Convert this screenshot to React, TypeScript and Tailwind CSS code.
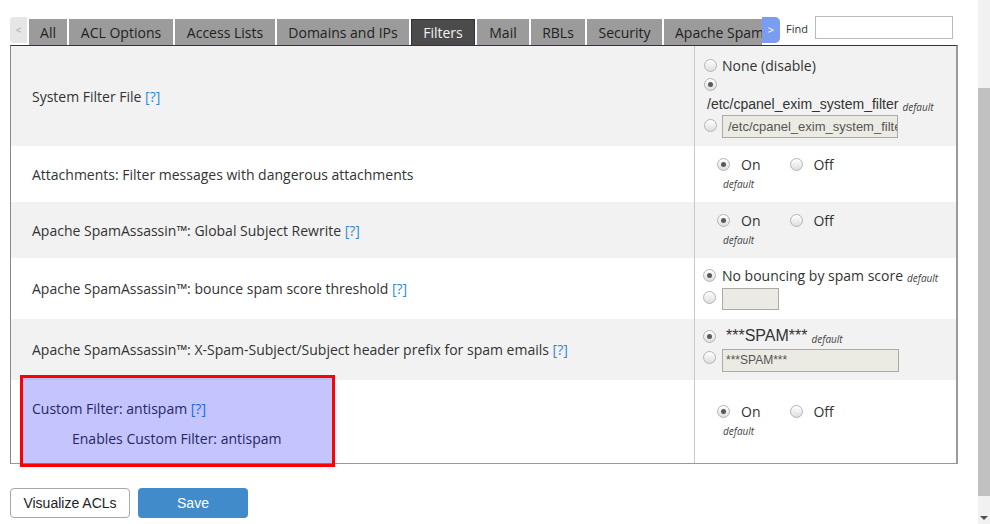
import React from "react";

const OS = "font-['Open_Sans',sans-serif]";
const AR = "font-['Liberation_Sans',Arial,sans-serif]";

function Radio({ checked = false, className = "" }: { checked?: boolean; className?: string }) {
  return (
    <span
      className={`inline-flex shrink-0 w-[13px] h-[13px] rounded-full border border-[#b4b4b4] bg-gradient-to-b from-[#ffffff] to-[#dedede] items-center justify-center ${className}`}
    >
      {checked && <span className="w-[5px] h-[5px] rounded-full bg-[#5a5a5a]" />}
    </span>
  );
}

function Help() {
  return <span className="text-[#2e8ad8]">[?]</span>;
}

function Def() {
  return <span className={`${OS} italic text-[10px] text-[#444]`}>default</span>;
}

function OnOff({ pt }: { pt: string }) {
  return (
    <div className={`${pt} pl-[22px] ${OS} text-[14px] text-[#333]`}>
      <div className="flex items-center h-[20px]">
        <Radio checked />
        <span className="ml-[11px]">On</span>
        <Radio className="ml-[30px]" />
        <span className="ml-[10px]">Off</span>
      </div>
      <div className="mt-[1px] h-[16px] leading-[16px] pl-[6px]">
        <Def />
      </div>
    </div>
  );
}

const tabs: { t: string; w: string; active?: boolean }[] = [
  { t: "All", w: "w-[38px]" },
  { t: "ACL Options", w: "w-[104px]" },
  { t: "Access Lists", w: "w-[100px]" },
  { t: "Domains and IPs", w: "w-[132px]" },
  { t: "Filters", w: "w-[64px]", active: true },
  { t: "Mail", w: "w-[52px]" },
  { t: "RBLs", w: "w-[54px]" },
  { t: "Security", w: "w-[75px]" },
  { t: "Apache SpamAssassin™", w: "w-[170px]" },
];

export default function App() {
  return (
    <div className="flex w-[990px] h-[524px] overflow-hidden bg-white">
      <div className="flex-1 pl-[10px] text-[#333]">
        {/* tab bar */}
        <div className="flex items-start h-[29px] mt-[16px]">
          <div className="mt-[1px] h-[26px] w-[17px] bg-[#e6e6e6] rounded-l-[4px] flex items-center justify-center text-[10px] text-[#aaa]">
            &lt;
          </div>
          <div className="ml-[2px] mt-[3px] h-[26px] w-[733px] overflow-hidden flex gap-[2px]">
            {tabs.map(({ t, w, active }) => (
              <div
                key={t}
                className={`${OS} ${w} shrink-0 h-[26px] flex items-center justify-center text-[14px] whitespace-nowrap ${
                  active
                    ? "bg-[#4b4b4b] text-[#f2f2f2] border border-[#2b3448] border-b-0"
                    : "bg-[#9b9b9b] text-[#222]"
                } ${t.startsWith("Apache") ? "justify-start pl-[11px]" : ""}`}
              >
                {t}
              </div>
            ))}
          </div>
          <div className="mt-[1px] h-[26px] w-[18px] bg-[#7a9cf2] rounded-r-[5px] flex items-center justify-center text-[11px] text-white">
            &gt;
          </div>
          <span className={`${OS} ml-[6px] mt-[5px] text-[11px] text-[#333]`}>Find</span>
          <input className="ml-[7px] w-[138px] h-[23px] border border-[#bbb] bg-white outline-none" />
        </div>

        {/* panel */}
        <div className={`w-[948px] border-l border-l-[#888] border-r-2 border-r-[#9a9a9a] border-t border-t-[#2b3448] border-b border-b-[#999] ${OS} text-[14px]`}>
          {/* row 1 */}
          <div className="flex h-[100px] bg-[#f2f2f2]">
            <div className="w-[683px] pl-[21px] flex items-center">
              System Filter File&nbsp;<Help />
            </div>
            <div className="flex-1 border-l border-[#c8c8c8] pt-[9px] pl-[9px]">
              <div className="flex items-center h-[20px]">
                <Radio />
                <span className="ml-[5px]">None (disable)</span>
              </div>
              <div className="flex items-center h-[19px]">
                <Radio checked />
              </div>
              <div className="flex items-center h-[20px] pl-[3px]">
                <span className={`${AR} text-[14px]`}>/etc/cpanel_exim_system_filter</span>
                <span className="ml-[4px] mt-[2px]">
                  <Def />
                </span>
              </div>
              <div className="flex items-start h-[23px] mt-[1px]">
                <Radio className="mt-[4px]" />
                <div className={`ml-[5px] w-[176px] h-[23px] bg-[#ebebe4] border border-[#aaa] ${AR} text-[13px] text-[#555] pl-[5px] leading-[21px] overflow-hidden whitespace-nowrap`}>
                  /etc/cpanel_exim_system_filter
                </div>
              </div>
            </div>
          </div>

          {/* row 2 */}
          <div className="flex h-[56px] bg-white">
            <div className="w-[683px] pl-[21px] flex items-center">
              Attachments: Filter messages with dangerous attachments
            </div>
            <div className="flex-1 border-l border-[#c8c8c8]">
              <OnOff pt="pt-[8px]" />
            </div>
          </div>

          {/* row 3 */}
          <div className="flex h-[56px] bg-[#f2f2f2]">
            <div className="w-[683px] pl-[21px] flex items-center">
              Apache SpamAssassin™: Global Subject Rewrite&nbsp;<Help />
            </div>
            <div className="flex-1 border-l border-[#c8c8c8]">
              <OnOff pt="pt-[8px]" />
            </div>
          </div>

          {/* row 4 */}
          <div className="flex h-[61px] bg-white">
            <div className="w-[683px] pl-[21px] flex items-center">
              Apache SpamAssassin™: bounce spam score threshold&nbsp;<Help />
            </div>
            <div className="flex-1 border-l border-[#c8c8c8] pt-[7px] pl-[8px]">
              <div className="flex items-center h-[20px]">
                <Radio checked />
                <span className="ml-[6px]">No bouncing by spam score</span>
                <span className="ml-[4px] mt-[2px]">
                  <Def />
                </span>
              </div>
              <div className="flex items-start mt-[3px]">
                <Radio className="mt-[3px]" />
                <div className="ml-[6px] w-[57px] h-[22px] bg-[#ebebe4] border border-[#aaa]" />
              </div>
            </div>
          </div>

          {/* row 5 */}
          <div className="flex h-[61px] bg-[#f2f2f2]">
            <div className="w-[683px] pl-[21px] flex items-center">
              Apache SpamAssassin™: X-Spam-Subject/Subject header prefix for spam emails&nbsp;<Help />
            </div>
            <div className="flex-1 border-l border-[#c8c8c8] pt-[7px] pl-[8px]">
              <div className="flex items-center h-[20px]">
                <Radio checked />
                <span className={`ml-[10px] ${AR} text-[16px]`}>***SPAM***</span>
                <span className="ml-[4px] mt-[3px]">
                  <Def />
                </span>
              </div>
              <div className="flex items-start mt-[3px]">
                <Radio className="mt-[2px]" />
                <div className={`ml-[6px] w-[177px] h-[23px] bg-[#ebebe4] border border-[#aaa] ${AR} text-[12px] text-[#555] pl-[3px] leading-[20px]`}>
                  ***SPAM***
                </div>
              </div>
            </div>
          </div>

          {/* row 6 */}
          <div className="relative flex h-[83px] bg-white">
            <div className="w-[683px] pl-[21px] pt-[18px]">
              <div className="h-[20px] flex items-center">
                Custom Filter: antispam&nbsp;<Help />
              </div>
              <div className="h-[20px] mt-[10px] pl-[40px] flex items-center">Enables Custom Filter: antispam</div>
            </div>
            <div className="flex-1 border-l border-[#c8c8c8]">
              <OnOff pt="pt-[21px]" />
            </div>
            <div className="absolute left-[9px] top-[-5px] w-[315px] h-[92px] border-[3px] border-[#ff0000] bg-[rgba(0,0,255,0.23)]" />
          </div>
        </div>

        {/* buttons */}
        <div className={`flex gap-[8px] mt-[24px] ${AR} text-[14px]`}>
          <button className="w-[120px] h-[30px] border border-[#a8a8a8] rounded-[4px] bg-white text-[#222]">
            Visualize ACLs
          </button>
          <button className="w-[110px] h-[30px] rounded-[4px] bg-[#428bca] text-white">Save</button>
        </div>
      </div>

      {/* scrollbar */}
      <div className="w-[12px] h-[524px] bg-[#f1f1f1] flex flex-col">
        <div className="mt-[88px] h-[408px] bg-[#c1c1c1]" />
        <div className="flex-1 flex items-end justify-center pb-[4px]">
          <div className="w-0 h-0 border-l-[4px] border-r-[4px] border-t-[4px] border-l-transparent border-r-transparent border-t-[#505050]" />
        </div>
      </div>
    </div>
  );
}
